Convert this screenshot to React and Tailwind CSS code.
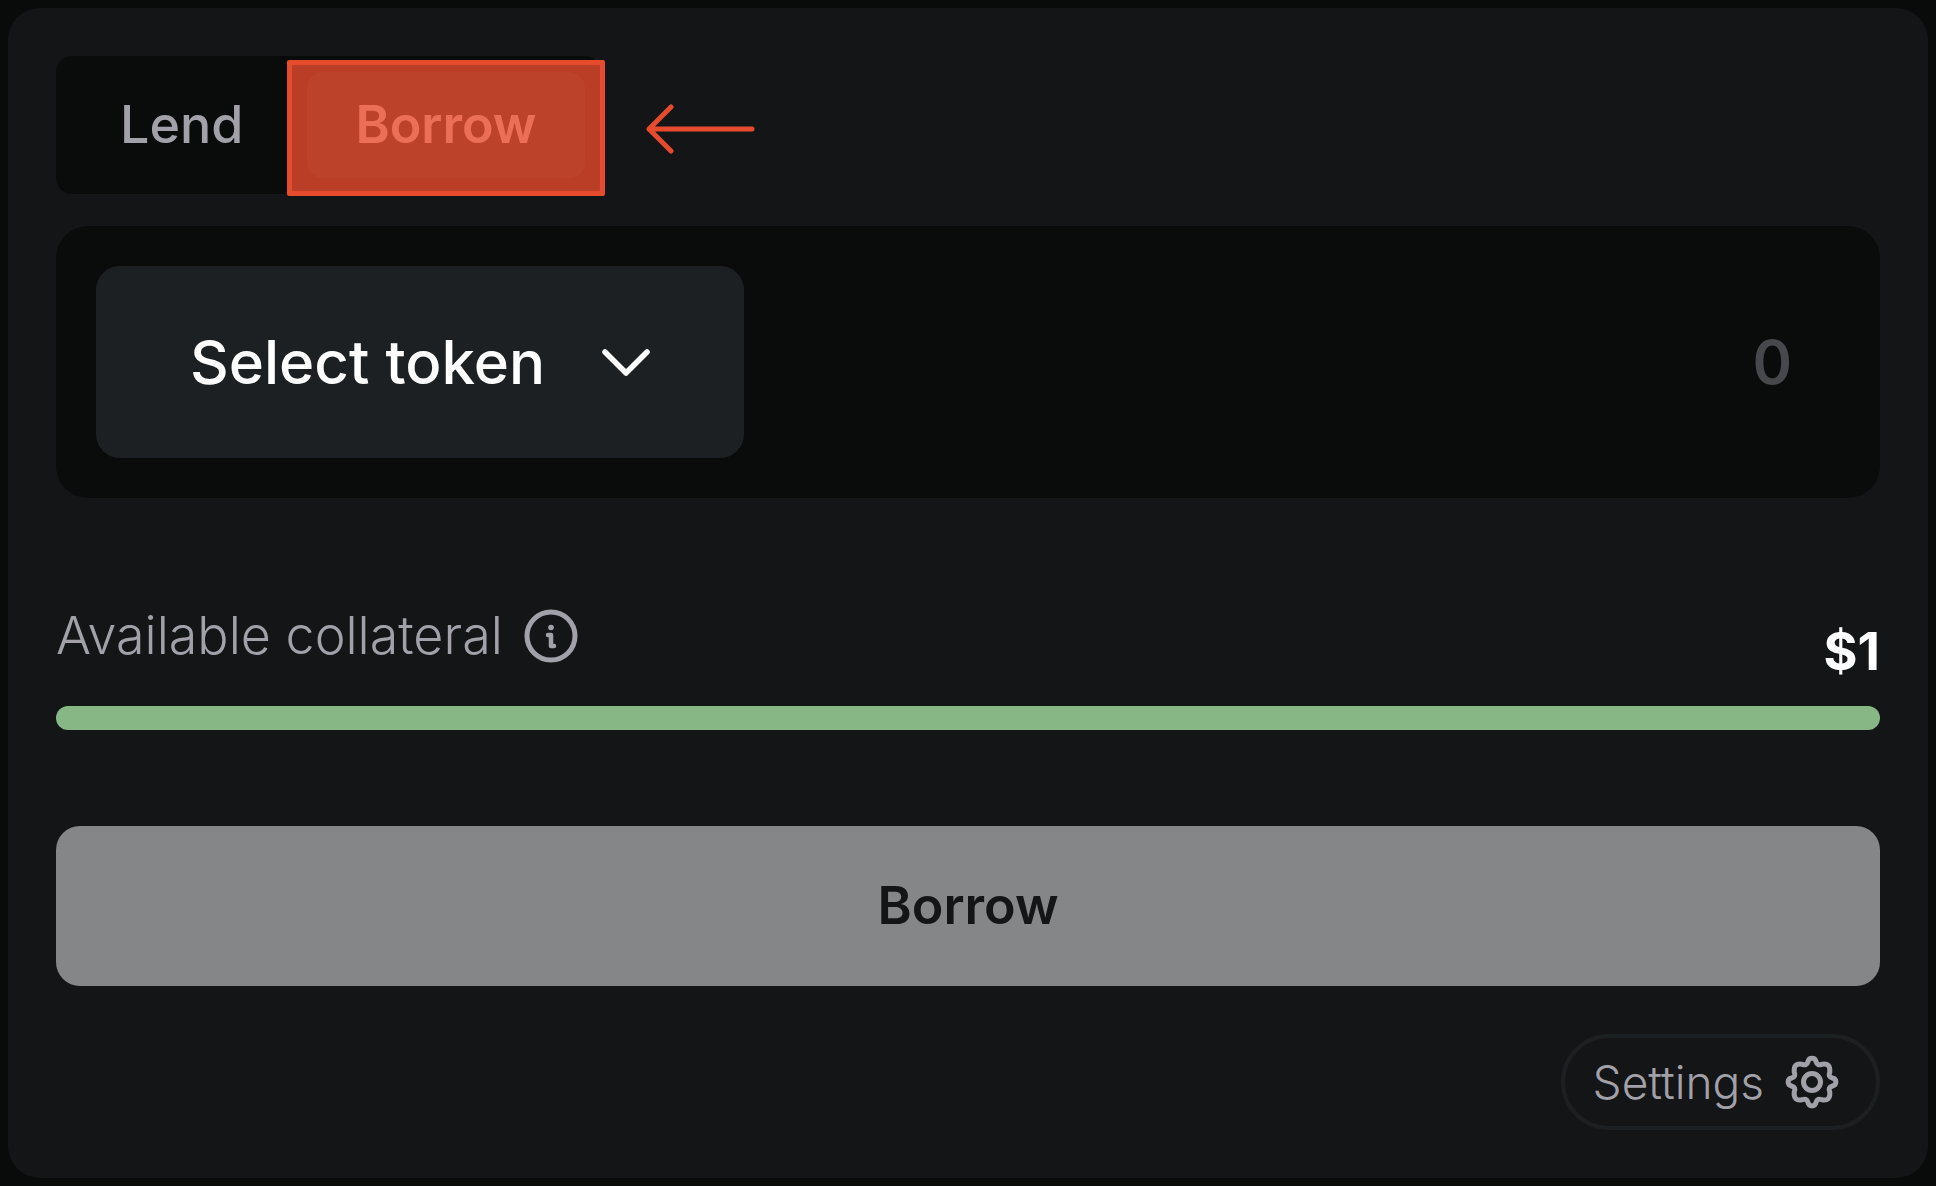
import React from "react";

function ArrowLeft() {
  return (
    <svg className="mt-2 h-[50px] w-[112px] shrink-0" viewBox="0 0 112 50" fill="none" stroke="#e54b2c" strokeWidth="5" strokeLinecap="round" strokeLinejoin="round" aria-hidden="true">
      <path d="M26 3 4 25l22 22M4 25h103" />
    </svg>
  );
}

function InfoIcon() {
  return (
    <svg className="size-14" viewBox="0 0 56 56" fill="none" stroke="#a2a1a9" strokeLinecap="round" strokeLinejoin="round" aria-hidden="true">
      <circle cx="28" cy="28" r="24" strokeWidth="5" />
      <path d="M25 27h3v11h3" strokeWidth="4.5" />
      <circle cx="28" cy="19.5" r="2.8" fill="#a2a1a9" stroke="none" />
    </svg>
  );
}

function GearIcon() {
  return (
    <svg className="size-14" viewBox="0 0 56 56" fill="none" stroke="#a2a1a9" strokeWidth="5" strokeLinejoin="round" strokeLinecap="round" aria-hidden="true">
      <path d="M24 7.500C25 3 31 3 32 7.500C33 11 35 11.500 38 10.200Q46.500 8.500 45.800 18C44.500 21 45 23 48.500 24C53 25 53 31 48.500 32C45 33 44.500 35 45.800 38Q46.500 47.500 38 45.800C35 44.500 33 45 32 48.500C31 53 25 53 24 48.500C23 45 21 44.500 18 45.800Q9.500 47.500 10.200 38C11.500 35 11 33 7.500 32C3 31 3 25 7.500 24C11 23 11.500 21 10.200 18Q9.500 8.500 18 10.200C21 11.500 23 11 24 7.500Z" />
      <circle cx="28" cy="28" r="8.500" />
    </svg>
  );
}

export default function App() {
  return (
    <div className="min-h-screen bg-[#090b0a] p-2 font-['Inter',sans-serif]">
      <main className="flex flex-col rounded-[32px] bg-[#141517] p-12">
        <div className="flex items-center gap-11">
          <div className="flex rounded-2xl bg-[#0a0c0b] py-4 pr-4" role="tablist" aria-label="Mode">
            <button type="button" role="tab" aria-selected="false" className="h-[106px] px-16 text-[52px] leading-none font-medium text-[#a2a1a9]">
              Lend
            </button>
            <div className="relative">
              <button type="button" role="tab" aria-selected="true" className="h-[106px] rounded-2xl bg-[#1d2022] px-12 text-[52px] leading-none font-semibold text-white">
                Borrow
              </button>
              <span className="pointer-events-none absolute -inset-x-5 -top-3 -bottom-[18px] rounded-xs border-[5px] border-[#e54b2c] bg-[#e54b2c]/80" aria-hidden="true" />
            </div>
          </div>
          <ArrowLeft />
        </div>

        <div className="mt-8 flex items-center rounded-[32px] bg-[#0a0c0b] p-10">
          <div className="relative shrink-0">
            <select aria-label="Token" defaultValue="" className="h-48 appearance-none rounded-3xl bg-[#1d2022] pr-[198px] pl-[94px] text-[60px] leading-none font-medium text-white">
              <option value="">Select token</option>
            </select>
            <svg className="pointer-events-none absolute top-20 right-[93px] h-8 w-[50px]" viewBox="0 0 50 32" fill="none" stroke="white" strokeWidth="5.500" strokeLinecap="round" strokeLinejoin="round" aria-hidden="true">
              <path d="M4 6 25 27 46 6" />
            </svg>
          </div>
          <input type="text" inputMode="decimal" aria-label="Amount" placeholder="0" className="min-w-0 flex-1 bg-transparent pr-12 text-right text-[60px] leading-none font-semibold text-white outline-none placeholder:text-[#47484b]" />
        </div>

        <div className="mt-[108px] flex items-start justify-between">
          <div className="flex items-center gap-5">
            <span id="collateral" className="text-[52px] leading-[60px] font-light text-[#a2a1a9]">Available collateral</span>
            <button type="button" aria-label="About available collateral"><InfoIcon /></button>
          </div>
          <span className="mt-4 text-[52px] leading-[60px] font-bold text-white">$1</span>
        </div>
        <div className="mt-6 h-6 rounded-full bg-[#86b785]" role="meter" aria-labelledby="collateral" aria-valuenow={1} aria-valuemin={0} aria-valuemax={1} />

        <button type="button" className="mt-24 h-40 rounded-3xl bg-[#858688] text-[52px] leading-none font-semibold text-[#141517]">
          Borrow
        </button>

        <button type="button" className="mt-12 flex h-24 items-center gap-5 self-end rounded-full border-4 border-[#1d2022] pr-9 pl-7 text-[46px] leading-none font-light text-[#a2a1a9]">
          Settings
          <GearIcon />
        </button>
      </main>
    </div>
  );
}
